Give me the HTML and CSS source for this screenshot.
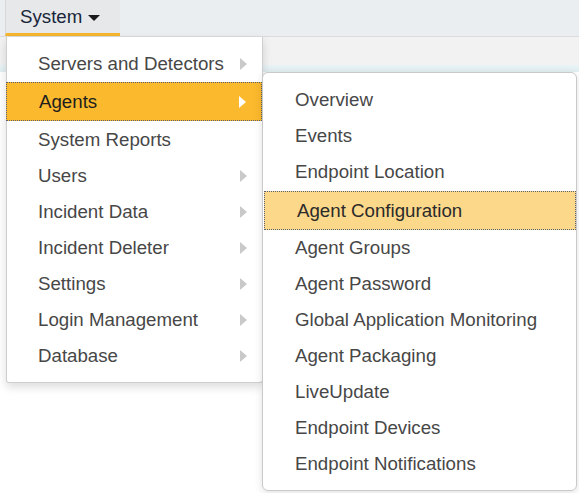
FILE: index.html
```html
<!DOCTYPE html>
<html>
<head>
<meta charset="utf-8">
<link rel="stylesheet" href="styles.css">
</head>
<body>
<div class="topbar">
  <div class="tab">System <span class="caret"></span></div>
</div>
<div class="strip"></div>
<div class="bluestrip"></div>
<div class="page"></div>

<div class="menu main">
  <div class="item"><span>Servers and Detectors</span><span class="arrow"></span></div>
  <div class="item active"><span>Agents</span><span class="arrow white"></span></div>
  <div class="item"><span>System Reports</span></div>
  <div class="item"><span>Users</span><span class="arrow"></span></div>
  <div class="item"><span>Incident Data</span><span class="arrow"></span></div>
  <div class="item"><span>Incident Deleter</span><span class="arrow"></span></div>
  <div class="item"><span>Settings</span><span class="arrow"></span></div>
  <div class="item"><span>Login Management</span><span class="arrow"></span></div>
  <div class="item"><span>Database</span><span class="arrow"></span></div>
</div>

<div class="menu sub">
  <div class="item"><span>Overview</span></div>
  <div class="item"><span>Events</span></div>
  <div class="item"><span>Endpoint Location</span></div>
  <div class="item hover"><span>Agent Configuration</span></div>
  <div class="item"><span>Agent Groups</span></div>
  <div class="item"><span>Agent Password</span></div>
  <div class="item"><span>Global Application Monitoring</span></div>
  <div class="item"><span>Agent Packaging</span></div>
  <div class="item"><span>LiveUpdate</span></div>
  <div class="item"><span>Endpoint Devices</span></div>
  <div class="item"><span>Endpoint Notifications</span></div>
</div>
</body>
</html>
```

FILE: styles.css
```css
html, body {
  margin: 0;
  padding: 0;
  background: #ffffff;
  font-family: "Liberation Sans", Arial, sans-serif;
  width: 579px;
  height: 493px;
  overflow: hidden;
  position: relative;
}

.topbar {
  height: 36px;
  background: #ebeef1;
  border-bottom: 1px solid #dcdcdc;
  display: flex;
  padding-left: 5px;
}

.tab {
  width: 115px;
  height: 36px;
  background: #e7e8ea;
  border-left: 1px solid #d6d8da;
  border-bottom: 3px solid #f5b52c;
  display: flex;
  align-items: center;
  padding-left: 14px;
  box-sizing: border-box;
  font-size: 18.7px;
  color: #18263a;
  gap: 6px;
}

.caret {
  width: 0;
  height: 0;
  border-left: 6px solid transparent;
  border-right: 6px solid transparent;
  border-top: 6px solid #1a1a1a;
  margin-top: 2px;
}

.strip {
  height: 28px;
  background: #f2f2f2;
}

.bluestrip {
  height: 7px;
  background: linear-gradient(#e9f4f6, #e2eef1);
}

.menu {
  position: absolute;
  background: #ffffff;
  box-sizing: border-box;
  font-size: 18.7px;
  color: #474747;
}

.main {
  left: 6px;
  top: 37px;
  width: 257px;
  height: 346px;
  border: 1px solid #cfcfcf;
  border-top: none;
  border-radius: 0 0 3px 3px;
  padding-top: 9px;
  box-shadow: 0 4px 10px rgba(0, 0, 0, 0.14);
  z-index: 1;
}

.item {
  height: 36px;
  display: flex;
  align-items: center;
  justify-content: space-between;
  box-sizing: border-box;
}

.main .item {
  padding-left: 31px;
  padding-right: 15px;
}

.main .item.active {
  height: 39px;
  margin: 0 0 1px -1px;
  padding-left: 32px;
  background: #fbb92d;
  border: 1px dotted #5a6070;
  color: #1e1e1e;
}

.arrow {
  width: 0;
  height: 0;
  border-top: 6px solid transparent;
  border-bottom: 6px solid transparent;
  border-left: 7px solid #c9c9c9;
}

.arrow.white {
  border-left-color: #ffffff;
}

.sub {
  left: 262px;
  top: 72px;
  width: 315px;
  height: 419px;
  border: 1px solid #c9c9c9;
  border-radius: 6px;
  padding-top: 9px;
  box-shadow: 0 2px 8px rgba(0, 0, 0, 0.12);
  z-index: 2;
}

.sub .item {
  padding-left: 32px;
}

.sub .item.hover {
  height: 39px;
  margin: 1px 0 0 1px;
  padding-left: 32px;
  background: #fcd88a;
  border: 1px dotted #5a6070;
  color: #2a2a2a;
}
```
